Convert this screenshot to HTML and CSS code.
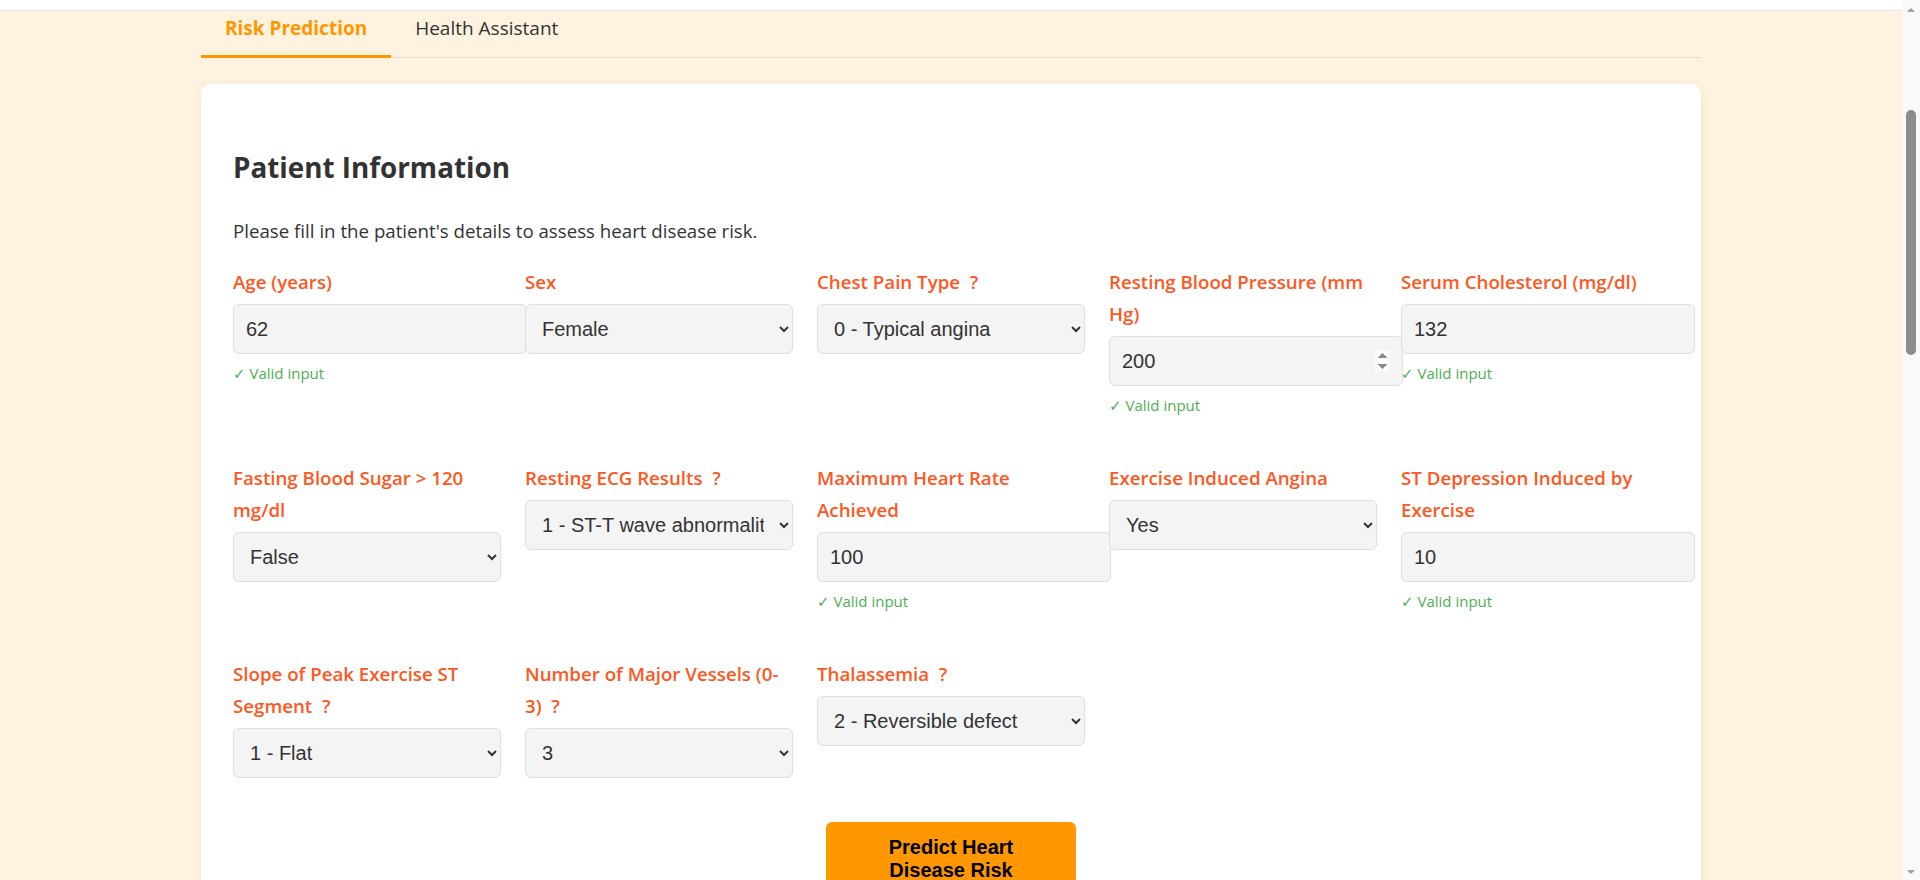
FILE: index.html
```html
<!DOCTYPE html>
<html lang="en">
<head>
<meta charset="utf-8">
<title>Heart Disease Risk Prediction</title>
<link rel="stylesheet" href="styles.css">
</head>
<body>
<div class="page">
  <div class="top-strip"></div>
  <div class="container">
    <nav class="tabs">
      <button class="tab active" type="button">Risk Prediction</button>
      <button class="tab" type="button">Health Assistant</button>
    </nav>
    <section class="card">
      <h2 class="card-title">Patient Information</h2>
      <p class="intro">Please fill in the patient's details to assess heart disease risk.</p>
      <form class="form">
        <div class="form-grid">
          <div class="field">
            <label class="field-label" for="age">Age (years)</label>
            <input class="field-input" id="age" type="number" value="62">
            <div class="valid">✓ Valid input</div>
          </div>
          <div class="field">
            <label class="field-label" for="sex">Sex</label>
            <select class="field-select" id="sex">
              <option>Male</option>
              <option selected>Female</option>
            </select>
          </div>
          <div class="field">
            <label class="field-label" for="cp" title="Type of chest pain experienced">Chest Pain Type&nbsp; ?</label>
            <select class="field-select" id="cp">
              <option selected>0 - Typical angina</option>
              <option>1 - Atypical angina</option>
              <option>2 - Non-anginal pain</option>
              <option>3 - Asymptomatic</option>
            </select>
          </div>
          <div class="field">
            <label class="field-label" for="trestbps">Resting Blood Pressure (mm Hg)</label>
            <input class="field-input spin-visible" id="trestbps" type="number" value="200">
            <div class="valid">✓ Valid input</div>
          </div>
          <div class="field">
            <label class="field-label" for="chol">Serum Cholesterol (mg/dl)</label>
            <input class="field-input" id="chol" type="number" value="132">
            <div class="valid">✓ Valid input</div>
          </div>

          <div class="field">
            <label class="field-label" for="fbs">Fasting Blood Sugar &gt; 120 mg/dl</label>
            <select class="field-select" id="fbs">
              <option selected>False</option>
              <option>True</option>
            </select>
          </div>
          <div class="field">
            <label class="field-label" for="restecg" title="Resting electrocardiographic results">Resting ECG Results&nbsp; ?</label>
            <select class="field-select" id="restecg">
              <option>0 - Normal</option>
              <option selected>1 - ST-T wave abnormality</option>
              <option>2 - Left ventricular hypertrophy</option>
            </select>
          </div>
          <div class="field">
            <label class="field-label" for="thalach">Maximum Heart Rate Achieved</label>
            <input class="field-input" id="thalach" type="number" value="100">
            <div class="valid">✓ Valid input</div>
          </div>
          <div class="field">
            <label class="field-label" for="exang">Exercise Induced Angina</label>
            <select class="field-select" id="exang">
              <option>No</option>
              <option selected>Yes</option>
            </select>
          </div>
          <div class="field">
            <label class="field-label" for="oldpeak">ST Depression Induced by Exercise</label>
            <input class="field-input" id="oldpeak" type="number" value="10">
            <div class="valid">✓ Valid input</div>
          </div>

          <div class="field">
            <label class="field-label" for="slope" title="Slope of the peak exercise ST segment">Slope of Peak Exercise ST Segment&nbsp; ?</label>
            <select class="field-select" id="slope">
              <option>0 - Upsloping</option>
              <option selected>1 - Flat</option>
              <option>2 - Downsloping</option>
            </select>
          </div>
          <div class="field">
            <label class="field-label" for="ca" title="Number of major vessels colored by fluoroscopy">Number of Major Vessels (0-3)&nbsp; ?</label>
            <select class="field-select" id="ca">
              <option>0</option>
              <option>1</option>
              <option>2</option>
              <option selected>3</option>
            </select>
          </div>
          <div class="field">
            <label class="field-label" for="thal" title="Thalassemia blood disorder">Thalassemia&nbsp; ?</label>
            <select class="field-select" id="thal">
              <option>1 - Normal</option>
              <option selected>2 - Reversible defect</option>
              <option>3 - Fixed defect</option>
            </select>
          </div>
        </div>
        <div class="actions">
          <button class="predict-btn" type="button">Predict Heart Disease Risk</button>
        </div>
      </form>
    </section>
  </div>
</div>
<div class="scrollbar" aria-hidden="true">
  <div class="sb-arrow sb-up"></div>
  <div class="sb-thumb"></div>
  <div class="sb-space"></div>
  <div class="sb-arrow sb-down"></div>
</div>
</body>
</html>
```

FILE: styles.css
```css
html, body {
  margin: 0;
  height: 100%;
}

body {
  display: flex;
  overflow: hidden;
  background: #fff3e0;
  color: #333;
  font-family: "Open Sans", "Noto Sans", "DejaVu Sans", sans-serif;
}

.page {
  flex: 1;
  min-width: 0;
  height: 100vh;
  overflow: hidden;
}

.top-strip {
  height: 10px;
  background: #fff;
  border-bottom: 1px solid #e3e3e3;
}

.container {
  max-width: 1500px;
  margin: 0 auto;
}

/* Tabs */
.tabs {
  display: flex;
  border-bottom: 1px solid #e2ded8;
}

.tab {
  margin: 0 0 -1px;
  padding: 4px 24px 14px;
  border: 0;
  border-bottom: 3px solid transparent;
  background: none;
  color: #333;
  font-family: "Open Sans", "Noto Sans", sans-serif;
  font-size: 19px;
  line-height: 26px;
  cursor: pointer;
}

.tab.active {
  color: #ff9800;
  font-weight: 700;
  border-bottom-color: #ff9800;
}

/* Card */
.card {
  margin-top: 26px;
  padding: 32px;
  background: #fff;
  border-radius: 10px;
  box-shadow: 0 2px 12px rgba(0, 0, 0, 0.06);
}

.card-title {
  margin: 32px 0 32px;
  font-size: 27.8px;
  line-height: 38px;
  font-weight: 700;
  color: #333;
}

.intro {
  margin: 0 0 23px;
  font-size: 18.7px;
  line-height: 25px;
}

/* Form grid */
.form-grid {
  display: grid;
  grid-template-columns: repeat(5, 1fr);
  column-gap: 24px;
  row-gap: 46px;
  align-items: start;
}

.field-label {
  display: block;
  margin-bottom: 6px;
  color: #ff5722;
  font-size: 18.7px;
  line-height: 32px;
  font-weight: 600;
}

.field-input {
  display: block;
  box-sizing: content-box;
  width: 100%;
  height: 24px;
  margin: 0;
  padding: 12px;
  border: 1px solid #dedede;
  border-radius: 6px;
  background: #f4f4f4;
  color: #333;
  font-family: "Liberation Sans", Arial, sans-serif;
  font-size: 20px;
}

.spin-visible::-webkit-inner-spin-button {
  opacity: 1;
}

.field-select {
  display: block;
  box-sizing: border-box;
  width: 100%;
  height: 50px;
  margin: 0;
  padding: 0 12px;
  border: 1px solid #dedede;
  border-radius: 6px;
  background-color: #f4f4f4;
  color: #333;
  font-family: "Liberation Sans", Arial, sans-serif;
  font-size: 20px;
}

.valid {
  margin-top: 9px;
  color: #4caf50;
  font-size: 15px;
  line-height: 21px;
}

.actions {
  margin-top: 44px;
  text-align: center;
}

.predict-btn {
  box-sizing: border-box;
  width: 250px;
  padding: 14px 30px;
  border: 0;
  border-radius: 6px;
  background: #ff9800;
  color: #000;
  font-family: "Liberation Sans", Arial, sans-serif;
  font-size: 20px;
  line-height: 23px;
  font-weight: 700;
  cursor: pointer;
}

/* Scrollbar */
.scrollbar {
  flex: none;
  width: 18px;
  height: 100vh;
  display: flex;
  flex-direction: column;
  align-items: center;
  background: #f9f9f9;
}

.sb-arrow {
  flex: none;
  width: 18px;
  height: 17px;
  display: flex;
  align-items: center;
  justify-content: center;
}

.sb-up {
  height: 20px;
}

.sb-up::before {
  content: "";
  border-left: 4px solid transparent;
  border-right: 4px solid transparent;
  border-bottom: 4px solid #a0a0a0;
}

.sb-down::before {
  content: "";
  border-left: 4px solid transparent;
  border-right: 4px solid transparent;
  border-top: 4px solid #a0a0a0;
}

.sb-thumb {
  flex: none;
  width: 10px;
  height: 245px;
  margin-top: 90px;
  border-radius: 5px;
  background: #8c8c8c;
}

.sb-space {
  flex: 1;
}
```
